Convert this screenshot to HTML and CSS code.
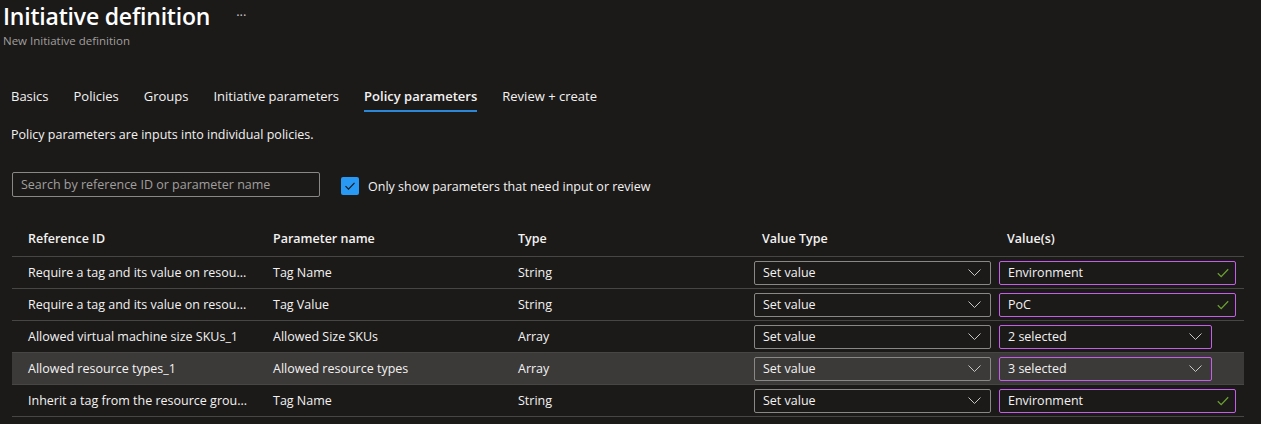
FILE: index.html
```html
<!DOCTYPE html>
<html lang="en">
<head>
<meta charset="utf-8">
<title>Initiative definition</title>
<link rel="stylesheet" href="styles.css">
</head>
<body>
<header class="page-header">
  <div class="title-row">
    <h1 class="title">Initiative definition</h1>
    <span class="more">···</span>
  </div>
  <div class="subtitle">New Initiative definition</div>
</header>

<nav class="tabs">
  <span class="tab">Basics</span>
  <span class="tab">Policies</span>
  <span class="tab">Groups</span>
  <span class="tab">Initiative parameters</span>
  <span class="tab active">Policy parameters</span>
  <span class="tab">Review + create</span>
</nav>

<p class="desc">Policy parameters are inputs into individual policies.</p>

<div class="filters">
  <div class="search">Search by reference ID or parameter name</div>
  <div class="check">
    <span class="box"><svg width="12" height="10" viewBox="0 0 12 10"><path d="M1.5 5.2 L4.5 8.2 L10.5 1.8" fill="none" stroke="#1b1a19" stroke-width="1.2"/></svg></span>
    <span class="check-label">Only show parameters that need input or review</span>
  </div>
</div>

<div class="grid">
  <div class="row head">
    <div class="cell">Reference ID</div>
    <div class="cell">Parameter name</div>
    <div class="cell">Type</div>
    <div class="cell">Value Type</div>
    <div class="cell">Value(s)</div>
  </div>

  <div class="row">
    <div class="cell">Require a tag and its value on resou...</div>
    <div class="cell">Tag Name</div>
    <div class="cell">String</div>
    <div class="cell ctl"><div class="select"><span>Set value</span><svg class="chev" width="13" height="7" viewBox="0 0 13 7"><path d="M0.5 0.5 L6.5 6.5 L12.5 0.5" fill="none" stroke="#c8c6c4" stroke-width="1"/></svg></div></div>
    <div class="cell ctl"><div class="value text"><span>Environment</span><svg class="ok" width="12" height="10" viewBox="0 0 12 10"><path d="M0.8 5.2 L4.2 8.6 L11.2 1.2" fill="none" stroke="#6ba12f" stroke-width="1.3"/></svg></div></div>
  </div>

  <div class="row">
    <div class="cell">Require a tag and its value on resou...</div>
    <div class="cell">Tag Value</div>
    <div class="cell">String</div>
    <div class="cell ctl"><div class="select"><span>Set value</span><svg class="chev" width="13" height="7" viewBox="0 0 13 7"><path d="M0.5 0.5 L6.5 6.5 L12.5 0.5" fill="none" stroke="#c8c6c4" stroke-width="1"/></svg></div></div>
    <div class="cell ctl"><div class="value text"><span>PoC</span><svg class="ok" width="12" height="10" viewBox="0 0 12 10"><path d="M0.8 5.2 L4.2 8.6 L11.2 1.2" fill="none" stroke="#6ba12f" stroke-width="1.3"/></svg></div></div>
  </div>

  <div class="row">
    <div class="cell">Allowed virtual machine size SKUs_1</div>
    <div class="cell">Allowed Size SKUs</div>
    <div class="cell">Array</div>
    <div class="cell ctl"><div class="select"><span>Set value</span><svg class="chev" width="13" height="7" viewBox="0 0 13 7"><path d="M0.5 0.5 L6.5 6.5 L12.5 0.5" fill="none" stroke="#c8c6c4" stroke-width="1"/></svg></div></div>
    <div class="cell ctl"><div class="value multi"><span>2 selected</span><svg class="chev" width="13" height="7" viewBox="0 0 13 7"><path d="M0.5 0.5 L6.5 6.5 L12.5 0.5" fill="none" stroke="#c8c6c4" stroke-width="1"/></svg></div></div>
  </div>

  <div class="row hover">
    <div class="cell">Allowed resource types_1</div>
    <div class="cell">Allowed resource types</div>
    <div class="cell">Array</div>
    <div class="cell ctl"><div class="select"><span>Set value</span><svg class="chev" width="13" height="7" viewBox="0 0 13 7"><path d="M0.5 0.5 L6.5 6.5 L12.5 0.5" fill="none" stroke="#c8c6c4" stroke-width="1"/></svg></div></div>
    <div class="cell ctl"><div class="value multi"><span>3 selected</span><svg class="chev" width="13" height="7" viewBox="0 0 13 7"><path d="M0.5 0.5 L6.5 6.5 L12.5 0.5" fill="none" stroke="#c8c6c4" stroke-width="1"/></svg></div></div>
  </div>

  <div class="row">
    <div class="cell">Inherit a tag from the resource grou...</div>
    <div class="cell">Tag Name</div>
    <div class="cell">String</div>
    <div class="cell ctl"><div class="select"><span>Set value</span><svg class="chev" width="13" height="7" viewBox="0 0 13 7"><path d="M0.5 0.5 L6.5 6.5 L12.5 0.5" fill="none" stroke="#c8c6c4" stroke-width="1"/></svg></div></div>
    <div class="cell ctl"><div class="value text"><span>Environment</span><svg class="ok" width="12" height="10" viewBox="0 0 12 10"><path d="M0.8 5.2 L4.2 8.6 L11.2 1.2" fill="none" stroke="#6ba12f" stroke-width="1.3"/></svg></div></div>
  </div>
</div>
</body>
</html>
```

FILE: styles.css
```css
* { box-sizing: border-box; }

html, body {
  margin: 0;
  padding: 0;
  background: #1b1a19;
  color: #f3f2f1;
  font-family: "Open Sans", "Noto Sans", "Liberation Sans", sans-serif;
  font-size: 13px;
  overflow: hidden;
}

.page-header {
  padding: 0 0 0 3px;
}

.title-row {
  display: flex;
  align-items: center;
  height: 33px;
}

.title {
  margin: 0;
  font-size: 23px;
  font-weight: 600;
  color: #ffffff;
  line-height: 33px;
  letter-spacing: -0.2px;
}

.more {
  margin-left: 26px;
  color: #c8c6c4;
  font-size: 13px;
  letter-spacing: 0;
  position: relative;
  top: -2px;
}

.subtitle {
  font-size: 11.5px;
  color: #a19f9d;
  line-height: 16px;
}

.tabs {
  display: flex;
  margin-top: 37px;
  padding-left: 11px;
}

.tab {
  font-size: 13px;
  line-height: 20px;
  padding-bottom: 4px;
  margin-right: 25px;
  color: #f3f2f1;
  border-bottom: 2px solid transparent;
}

.tab.active {
  font-weight: 600;
  border-bottom-color: #2b88d8;
}

.desc {
  margin: 14px 0 0 11px;
  font-size: 12.5px;
  line-height: 18px;
}

.filters {
  display: flex;
  align-items: center;
  margin-top: 28px;
  padding-left: 12px;
  height: 25px;
}

.search {
  width: 308px;
  height: 25px;
  border: 1px solid #8a8886;
  border-radius: 2px;
  padding: 0 8px;
  line-height: 23px;
  color: #a19f9d;
  font-size: 12.5px;
}

.check {
  display: flex;
  align-items: center;
  margin-left: 21px;
  padding-top: 3px;
}

.box {
  width: 18px;
  height: 18px;
  background: #2899f5;
  border-radius: 2px;
  display: flex;
  align-items: center;
  justify-content: center;
}

.check-label {
  margin-left: 9px;
  font-size: 12.5px;
  color: #f3f2f1;
}

.grid {
  margin: 24px 17px 0 12px;
}

.row {
  display: grid;
  grid-template-columns: 245px 245px 244px 245px 1fr;
  height: 32px;
  border-bottom: 1px solid #484644;
  align-items: center;
}

.row.head {
  height: 36px;
  font-weight: 600;
}

.row.hover {
  background: #3b3a39;
}

.cell {
  padding-left: 16px;
  white-space: nowrap;
  overflow: hidden;
  font-size: 12.5px;
}

.cell.ctl {
  padding-left: 8px;
  overflow: visible;
}

.select,
.value {
  height: 24px;
  display: flex;
  align-items: center;
  justify-content: space-between;
  padding: 0 9px 0 8px;
  border-radius: 2px;
  font-size: 12.5px;
}

.select {
  width: 237px;
  border: 1px solid #8a8886;
}

.value {
  border: 1px solid #c65ee8;
}

.value.text {
  width: 237px;
  padding-right: 6px;
}

.value.multi {
  width: 213px;
}

.chev, .ok {
  flex: none;
}
```
